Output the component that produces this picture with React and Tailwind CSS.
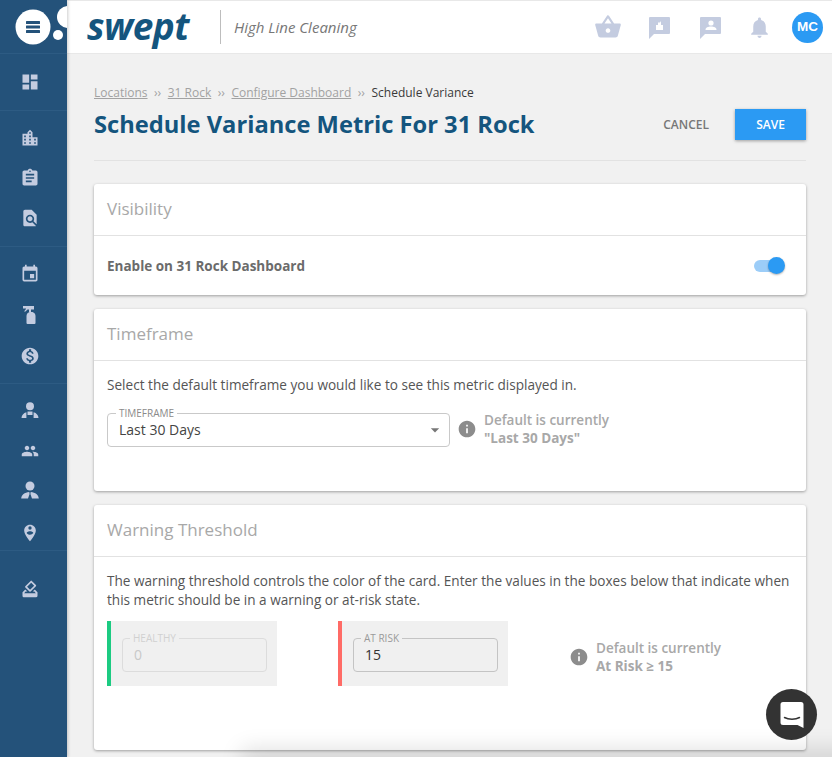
import React from "react";
import {
  MdDashboard, MdLocationCity, MdAssignment, MdFindInPage, MdEvent, MdMonetizationOn,
  MdPeople, MdPersonPinCircle, MdHowToVote, MdShoppingBasket, MdNotifications, MdInfo, MdArrowDropDown,
} from "react-icons/md";

const I = "text-[#c4cce0]";

function Spray() {
  return (
    <svg width="20" height="20" viewBox="0 0 20 20" fill="currentColor" className={I}>
      <path d="M3 1h11v3.500h-3V7h1.500c2 .8 3 2 3 4v7a1 1 0 0 1-1 1H7.500a1 1 0 0 1-1-1v-7c0-2 1-3.200 3-4H9V4.500H7.500L5.500 6.500H4L6 4V3.500H3z" />
    </svg>
  );
}
function PersonA() {
  return (
    <svg width="20" height="20" viewBox="0 0 20 20" fill="currentColor" className={I}>
      <circle cx="10" cy="5.200" r="4" />
      <path d="M7.500 10.500h5V14h-5zM6.400 11.200V17H1.500c.1-2.800 2-5 4.900-5.800zM13.600 11.200c2.900.8 4.800 3 4.900 5.800h-4.900z" />
    </svg>
  );
}
function PersonB() {
  return (
    <svg width="20" height="20" viewBox="0 0 20 20" fill="currentColor" className={I}>
      <circle cx="10" cy="5" r="4.500" />
      <path d="M9.300 11 9.600 13 8 17.500H1.200C1.400 14 4.500 11.400 9.300 11zM10.700 11c4.800.4 7.900 3 8.100 6.500H12l-1.600-4.500z" />
    </svg>
  );
}

function SideIcon({ children, h = "h-10" }) {
  return <div className={`${h} flex items-center justify-center`}>{children}</div>;
}

function Sidebar() {
  const md = `${I} text-[20px]`;
  return (
    <aside className="w-[67px] shrink-0 h-full bg-[#24527a] shadow-[1px_0_3px_rgba(0,0,0,0.2)] z-10 flex flex-col">
      <div className="h-[54px] shrink-0 border-b border-[#2d5b83]">
        <svg width="67" height="53" viewBox="0 0 67 53">
          <circle cx="33" cy="27" r="17.500" fill="#fff" />
          <circle cx="58" cy="35" r="5" fill="#fff" />
          <circle cx="68" cy="17" r="11" fill="#fff" />
          <g fill="#24527a">
            <rect x="26" y="21" width="14" height="3" rx="0.500" />
            <rect x="26" y="25.500" width="14" height="3" rx="0.500" />
            <rect x="26" y="30" width="14" height="3" rx="0.500" />
          </g>
        </svg>
      </div>
      <div className="h-[57px] shrink-0 border-b border-[#2d5b83] pr-[7px] flex items-center justify-center">
        <MdDashboard className={md} />
      </div>
      <div className="h-[136px] shrink-0 border-b border-[#2d5b83] pt-[7px] pr-[7px]">
        <SideIcon><MdLocationCity className={md} /></SideIcon>
        <SideIcon><MdAssignment className={md} /></SideIcon>
        <SideIcon><MdFindInPage className={md} /></SideIcon>
      </div>
      <div className="h-[137px] shrink-0 border-b border-[#2d5b83] pt-[6px] pr-[7px]">
        <SideIcon h="h-[41px]"><MdEvent className={md} /></SideIcon>
        <SideIcon h="h-[41px]"><Spray /></SideIcon>
        <SideIcon h="h-[41px]"><MdMonetizationOn className={md} /></SideIcon>
      </div>
      <div className="h-[167px] shrink-0 border-b border-[#2d5b83] pt-[7px] pr-[7px]">
        <SideIcon><PersonA /></SideIcon>
        <SideIcon><MdPeople className={`${I} text-[18px]`} /></SideIcon>
        <SideIcon><PersonB /></SideIcon>
        <SideIcon h="h-[44px]"><MdPersonPinCircle className={md} /></SideIcon>
      </div>
      <div className="pt-[18px] pr-[7px]">
        <SideIcon><MdHowToVote className={md} /></SideIcon>
      </div>
    </aside>
  );
}

function Bubble({ children }) {
  return (
    <svg width="24" height="24" viewBox="0 0 24 24">
      <path d="M3 1h19a1 1 0 0 1 1 1v15a1 1 0 0 1-1 1H7l-5 5V2a1 1 0 0 1 1-1z" fill="#c4cce0" />
      {children}
    </svg>
  );
}

function Header() {
  return (
    <header className="h-[54px] shrink-0 bg-white border-t border-[#e8e8e8] border-b flex items-center">
      <span className="ml-[20px] w-[133px] text-[37px] leading-none italic font-bold text-[#14557e] tracking-[-0.5px] -mt-[3px] font-['Open_Sans',sans-serif]">
        swept
      </span>
      <div className="w-px h-[34px] bg-[#bdbdbd]" />
      <span className="ml-[13px] text-[15px] italic text-[#777] font-['Open_Sans',sans-serif]">High Line Cleaning</span>
      <div className="ml-auto flex items-center">
        <MdShoppingBasket className="text-[#c4cce0] text-[28px] mr-[25px]" />
        <div className="mr-[27px] flex mt-[1px]">
          <Bubble>
            <path d="M9 14V9h2V6.500h2V5l1 1.500V9h2v5z" fill="#fff" />
          </Bubble>
        </div>
        <div className="mr-[25px] flex mt-[1px]">
          <Bubble>
            <circle cx="13" cy="7" r="2.600" fill="#fff" />
            <path d="M7.500 14c0-2.400 2.600-3.400 5.500-3.400s5.500 1 5.500 3.400z" fill="#fff" />
          </Bubble>
        </div>
        <MdNotifications className="text-[#c4cce0] text-[25px] mr-[20px]" />
        <div className="w-[31px] h-[31px] mr-[9px] rounded-full bg-[#2b9af3] text-white text-[13.5px] font-bold flex items-center justify-center font-['Liberation_Sans',sans-serif]">
          MC
        </div>
      </div>
    </header>
  );
}

function Card({ title, h, children }) {
  return (
    <section className={`${h} bg-white rounded-[3px] shadow-[0_1px_3px_rgba(0,0,0,0.35)] flex flex-col`}>
      <div className="h-[52px] shrink-0 border-b border-[#e2e2e2] px-[13px] pb-[2px] flex items-center text-[17px] text-[#a8a8a8]">
        {title}
      </div>
      {children}
    </section>
  );
}

function Info({ l1, l2 }) {
  return (
    <div className="flex items-center">
      <MdInfo className="text-[#8c8c8c] text-[20px] mr-[7px]" />
      <div className="text-[13.5px] leading-[18px] text-[#a8a8a8] font-semibold">
        <div>{l1}</div>
        <div className="font-bold">{l2}</div>
      </div>
    </div>
  );
}

function Field({ label, value, disabled }) {
  return (
    <fieldset className={`w-[145px] h-[38px] rounded-[4px] border ${disabled ? "border-[#dcdcdc]" : "border-[#c4c4c4]"} px-[7px]`}>
      <legend className={`px-[3px] text-[10px] leading-[8px] ${disabled ? "text-[#d0d0d0]" : "text-[#9a9a9a]"}`}>{label}</legend>
      <div className={`pl-[4px] text-[14px] leading-[20px] mt-[3px] ${disabled ? "text-[#c8c8c8]" : "text-[#333]"}`}>{value}</div>
    </fieldset>
  );
}

function Threshold({ color, label, value, disabled }) {
  return (
    <div className="w-[170px] h-[65px] bg-[#f0f0f0] flex">
      <div className={`w-[4px] ${color}`} />
      <div className="pl-[11px] pt-[13px]">
        <Field label={label} value={value} disabled={disabled} />
      </div>
    </div>
  );
}

export default function App() {
  return (
    <div className="relative w-[832px] h-[757px] overflow-hidden flex bg-[#f1f1f1] font-['Open_Sans',sans-serif]">
      <Sidebar />
      <div className="flex-1 min-w-0 flex flex-col">
        <Header />
        <main className="pl-[27px] pr-[26px] flex flex-col">
          <nav className="mt-[30px] h-[18px] flex items-center text-[12px] text-[#a2a2a2]">
            <span className="underline">Locations</span>
            <span className="mx-[6.5px]">››</span>
            <span className="underline">31 Rock</span>
            <span className="mx-[6.5px]">››</span>
            <span className="underline">Configure Dashboard</span>
            <span className="mx-[6.5px]">››</span>
            <span className="text-[#3a3a3a]">Schedule Variance</span>
          </nav>
          <div className="h-[59px] border-b border-[#e2e2e2] flex items-start justify-between">
            <h1 className="mt-[4px] text-[23.7px] leading-[36px] font-bold text-[#14557e]">Schedule Variance Metric For 31 Rock</h1>
            <div className="flex items-center mt-[7px]">
              <span className="text-[12px] font-semibold text-[#777] mr-[26px]">CANCEL</span>
              <button className="w-[71px] h-[31px] bg-[#2b9af3] text-white text-[12px] font-semibold shadow-[0_1px_3px_rgba(0,0,0,0.35)]">SAVE</button>
            </div>
          </div>
          <div className="mt-[23px] flex flex-col gap-[14px]">
            <Card title="Visibility" h="h-[111px]">
              <div className="flex-1 flex items-center justify-between px-[13px]">
                <span className="mt-[1px] text-[13.5px] font-bold text-[#6b6b6b]">Enable on 31 Rock Dashboard</span>
                <div className="relative w-[30px] h-[12px] mr-[9px] rounded-full bg-[#9ccdf8]">
                  <div className="absolute -right-[1px] -top-[2.5px] w-[17px] h-[17px] rounded-full bg-[#2b9af3] shadow-[0_1px_2px_rgba(0,0,0,0.3)]" />
                </div>
              </div>
            </Card>
            <Card title="Timeframe" h="h-[182px]">
              <div className="px-[13px] pt-[14px]">
                <p className="text-[13.6px] leading-[19px] text-[#555]">Select the default timeframe you would like to see this metric displayed in.</p>
                <div className="mt-[15px] flex items-center">
                  <fieldset className="w-[343px] h-[38px] rounded-[4px] border border-[#c9c9c9] pl-[8px] pr-[4px]">
                    <legend className="px-[3px] text-[10px] leading-[8px] text-[#8a8a8a]">TIMEFRAME</legend>
                    <div className="flex items-center justify-between pl-[3px] mt-[3px]">
                      <span className="text-[14px] leading-[20px] text-[#444]">Last 30 Days</span>
                      <MdArrowDropDown className="text-[#777] text-[20px]" />
                    </div>
                  </fieldset>
                  <div className="ml-[7px] mt-[2px]">
                    <Info l1="Default is currently" l2={'"Last 30 Days"'} />
                  </div>
                </div>
              </div>
            </Card>
            <Card title="Warning Threshold" h="h-[245px]">
              <div className="px-[13px] pt-[14px]">
                <p className="text-[13.6px] leading-[19px] text-[#555]">
                  The warning threshold controls the color of the card. Enter the values in the boxes below that indicate when this metric should be in a warning or at-risk state.
                </p>
                <div className="mt-[12px] flex items-center">
                  <Threshold color="bg-[#1ccb82]" label="HEALTHY" value="0" disabled />
                  <div className="ml-[61px]">
                    <Threshold color="bg-[#ff6b66]" label="AT RISK" value="15" />
                  </div>
                  <div className="ml-[61px] mt-[7px]">
                    <Info l1="Default is currently" l2="At Risk ≥ 15" />
                  </div>
                </div>
              </div>
            </Card>
          </div>
        </main>
      </div>
      <div className="absolute left-[250px] right-[-20px] top-[757px] h-[10px] shadow-[0_0_22px_8px_rgba(0,0,0,0.13)]" />
      <div className="absolute left-[766px] top-[689px] w-[51px] h-[51px] rounded-full bg-[#333] flex items-center justify-center">
        <svg width="24" height="28" viewBox="0 0 24 28">
          <path d="M3 1h18a2.500 2.500 0 0 1 2.500 2.500V27l-6-3H3A2.500 2.500 0 0 1 .5 21.500V3.500A2.500 2.500 0 0 1 3 1z" fill="#fff" />
          <path d="M4.500 16.500c4 2.200 11 2.200 15 0" fill="none" stroke="#333" strokeWidth="1.500" strokeLinecap="round" />
        </svg>
      </div>
    </div>
  );
}
